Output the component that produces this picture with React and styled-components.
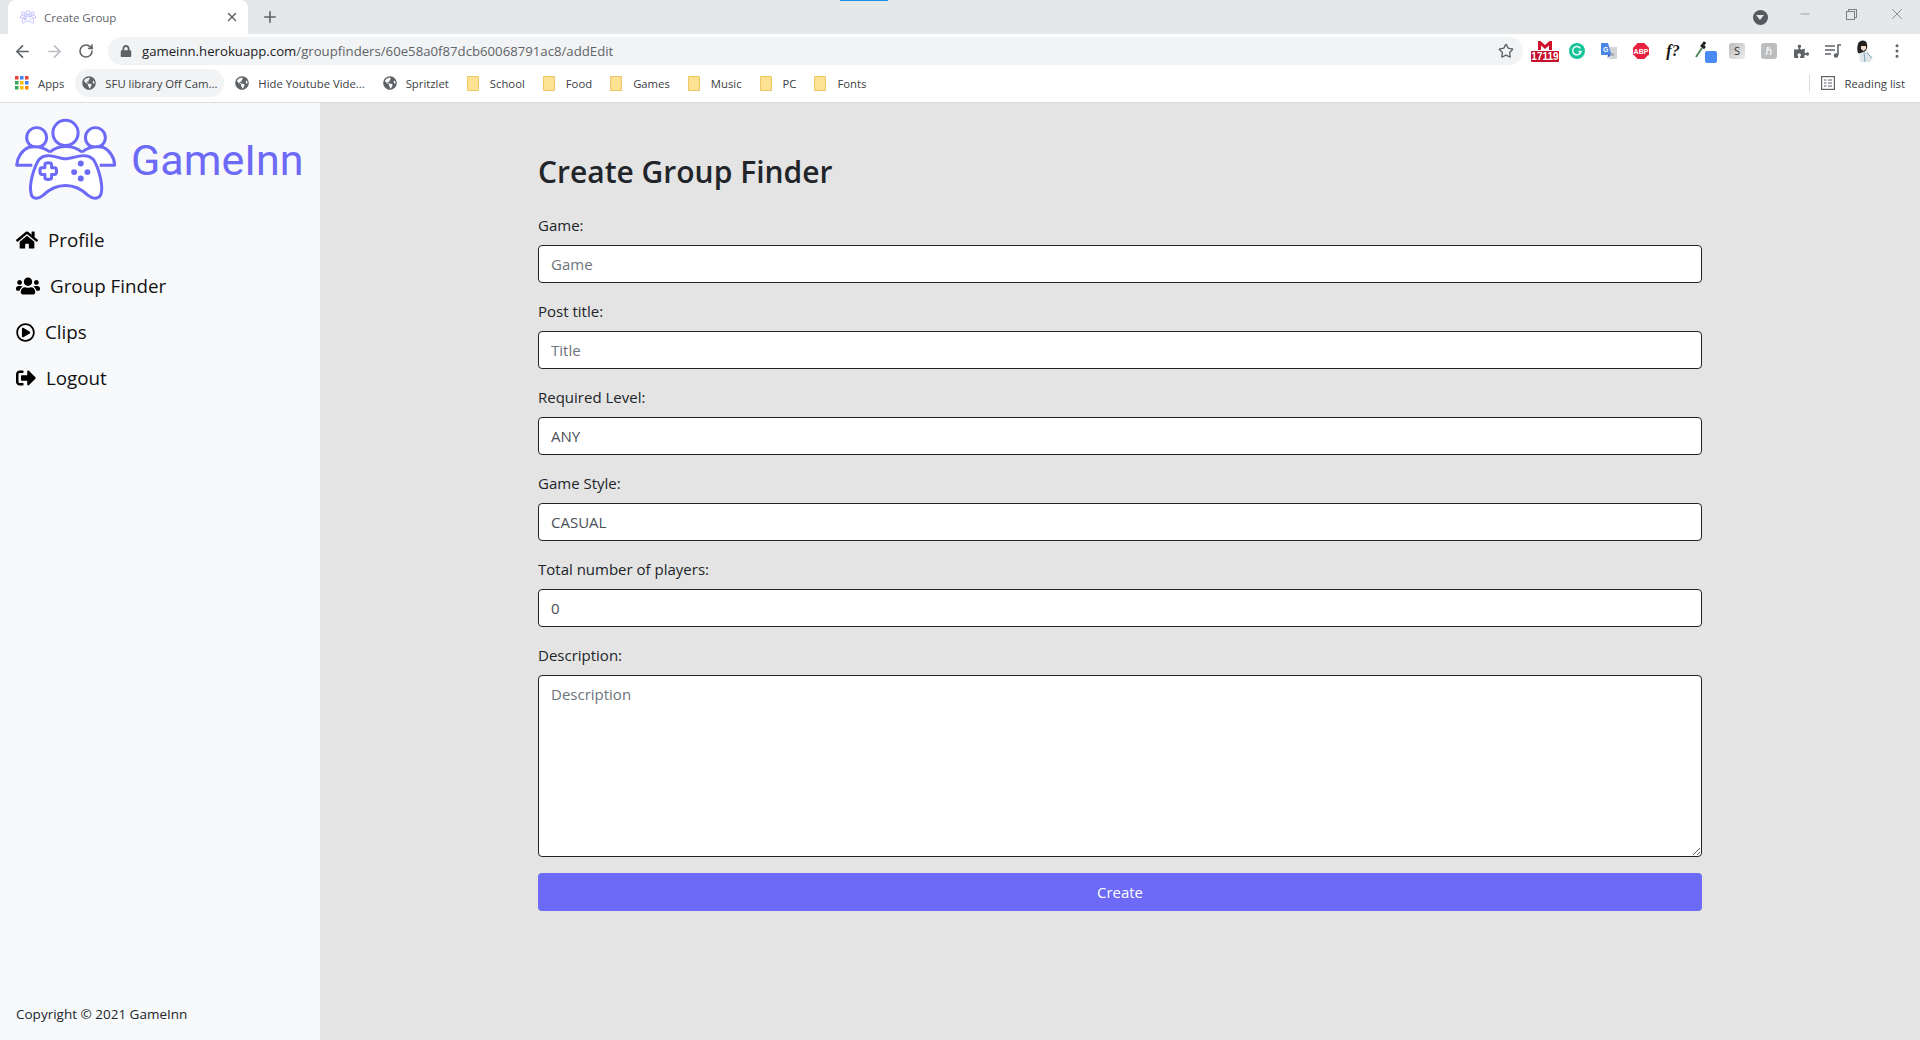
import React from "react";
import styled, { createGlobalStyle } from "styled-components";
import { FaHome, FaUsers, FaRegPlayCircle, FaSignOutAlt, FaGlobeAmericas, FaPuzzlePiece, FaLock } from "react-icons/fa";
import { ArrowLeft, ArrowRight, RotateCw, Star, Plus, X, Minus, MoreVertical } from "lucide-react";

const GlobalStyle = createGlobalStyle`
  html, body {
    margin: 0;
    padding: 0;
    height: 100%;
    overflow: hidden;
    font-family: "Open Sans", "Noto Sans", sans-serif;
  }
  * {
    box-sizing: border-box;
  }
`;

const LogoMark = ({ width, height, strokeWidth = 9, faded }) => (
  <LogoSvg
    $faded={faded}
    width={width}
    height={height}
    viewBox="24 25 302 250"
    fill="#fff"
    stroke="#6c6af6"
    strokeWidth={strokeWidth}
    strokeLinejoin="round"
  >
    <circle cx="172" cy="70" r="38" />
    <circle cx="85" cy="84" r="30" />
    <circle cx="262" cy="84" r="30" />
    <path d="M125 128C105 112 80 110 62 113C40 122 26 145 25 167H72" />
    <path d="M222 128C240 112 265 110 285 113C305 122 320 145 320 167H275" />
    <path d="M125 128C150 105 195 105 222 128" />
    <path d="M92 150C115 125 150 148 172 148C195 148 232 125 256 150C272 175 285 225 280 250C275 272 255 270 240 258C222 240 200 228 172 228C145 228 122 240 104 258C90 270 70 272 68 250C62 225 76 175 92 150Z" />
    <path d="M110 165C110 158 130 158 130 165V175H140C147 175 147 195 140 195H130V205C130 212 110 212 110 205V195H100C93 195 93 175 100 175H110Z" />
    <g fill="#6c6af6" stroke="none">
      <circle cx="218" cy="162" r="9" />
      <circle cx="198" cy="188" r="9" />
      <circle cx="238" cy="188" r="9" />
      <circle cx="218" cy="207" r="9" />
    </g>
  </LogoSvg>
);

const AppsIcon = () => (
  <svg width="14" height="14" viewBox="0 0 14 14">
    {["#ea4335", "#4285f4", "#ea4335", "#34a853", "#fbbc05", "#4285f4", "#34a853", "#fbbc05", "#fb8c00"].map((c, i) => (
      <rect key={i} x={(i % 3) * 5} y={Math.floor(i / 3) * 5} width="3.500" height="3.500" fill={c} />
    ))}
  </svg>
);

const FolderIcon = () => (
  <svg width="12" height="15" viewBox="0 0 12 15">
    <path d="M.5.500H11.500V14.500H.5Z" fill="#fde293" stroke="#eec765" />
  </svg>
);

const ReadingIcon = () => (
  <svg width="14" height="14" viewBox="0 0 14 14" fill="none" stroke="#5f6368" strokeWidth="1.200">
    <rect x=".6" y=".6" width="12.800" height="12.800" />
    <path d="M3 4H5.500M7 4H11M3 7H5.500M7 7H11M3 10H5.500M7 10H11" />
  </svg>
);

const GmailIcon = () => (
  <svg width="14" height="9" viewBox="0 0 14 9">
    <path d="M0 0H2.500L7 4L11.500 0H14V9H11V4.500L7 8L3 4.500V9H0Z" fill="#d0122c" />
  </svg>
);

const GrammarlyIcon = () => (
  <svg width="16" height="16" viewBox="0 0 16 16">
    <circle cx="8" cy="8" r="8" fill="#15c39a" />
    <path d="M11.500 5.500A4.200 4.200 0 1 0 12 8.500H9.500" fill="none" stroke="#fff" strokeWidth="1.400" />
  </svg>
);

const TranslateIcon = () => (
  <svg width="16" height="17" viewBox="0 0 16 17">
    <path d="M6 4H16V16H8Z" fill="#d3d5d8" />
    <path d="M0 1C0 .4.4 0 1 0H7L10.500 12H1C.4 12 0 11.600 0 11Z" fill="#4a86e8" />
    <path d="M7 12L6.500 15L9.500 12Z" fill="#2a5fb8" />
    <text x="2" y="8.500" fontSize="7" fontWeight="700" fill="#fff" fontFamily="Liberation Sans">G</text>
    <text x="10" y="13" fontSize="6" fill="#777" fontFamily="Liberation Sans">x</text>
  </svg>
);

const AbpIcon = () => (
  <svg width="16" height="16" viewBox="0 0 16 16">
    <path d="M4.700 0H11.300L16 4.700V11.300L11.300 16H4.700L0 11.300V4.700Z" fill="#e8213f" />
    <text x="8" y="10.500" textAnchor="middle" fontSize="7" fontWeight="700" fill="#fff" fontFamily="Liberation Sans">ABP</text>
  </svg>
);

const DropperIcon = () => (
  <svg width="12" height="18" viewBox="0 0 12 18">
    <path d="M1 17L7 8" stroke="#4c8a5a" strokeWidth="2" />
    <path d="M6 5L10 8" stroke="#222" strokeWidth="3" />
    <path d="M8 5L10 2" stroke="#222" strokeWidth="3" />
  </svg>
);

const PlaylistIcon = () => (
  <svg width="16" height="14" viewBox="0 0 16 14" fill="none" stroke="#5f6368" strokeWidth="1.400">
    <path d="M0 2H10M0 6H10M0 10H6" />
    <path d="M13 11V1H16" strokeWidth="1.600" />
    <circle cx="11" cy="11.500" r="2.200" fill="#5f6368" stroke="none" />
  </svg>
);

const AvatarIcon = () => (
  <svg width="18" height="22" viewBox="0 0 18 22">
    <path d="M3 13L10 10L17 18L14 22H4Z" fill="#dfe7ea" />
    <path d="M8 12L9 22M11 13L16 18" stroke="#7fa7b8" strokeWidth="1" />
    <path d="M2 4C3 0 10 -1 11 4C12 8 10 12 7 12C6 12 4 14 2 13C1 10 1 7 2 4Z" fill="#23201f" />
    <path d="M5 6H10V9L7.500 11L5 9Z" fill="#f2d9c8" />
  </svg>
);

const bookmarks = [
  { label: "SFU library Off Cam...", icon: "globe", active: true },
  { label: "Hide Youtube Vide...", icon: "globe" },
  { label: "Spritzlet", icon: "globe" },
  { label: "School" },
  { label: "Food" },
  { label: "Games" },
  { label: "Music" },
  { label: "PC" },
  { label: "Fonts" },
];

const navItems = [
  { label: "Profile", Icon: FaHome, size: 22 },
  { label: "Group Finder", Icon: FaUsers, size: 24 },
  { label: "Clips", Icon: FaRegPlayCircle, size: 19 },
  { label: "Logout", Icon: FaSignOutAlt, size: 20 },
];

const fields = [
  { label: "Game:", placeholder: "Game" },
  { label: "Post title:", placeholder: "Title" },
  { label: "Required Level:", value: "ANY" },
  { label: "Game Style:", value: "CASUAL" },
  { label: "Total number of players:", value: "0" },
];

const BrowserChrome = () => (
  <Chrome>
    <LoadingStrip />
    <TabStrip>
      <Tab>
        <LogoMark width={16} height={14} strokeWidth={14} faded />
        <TabTitle>Create Group</TabTitle>
        <X size={14} color="#5f6368" strokeWidth={2.4} />
      </Tab>
      <NewTab>
        <Plus size={18} color="#5f6368" strokeWidth={2.2} />
      </NewTab>
      <WindowControls>
        <ProfileSlot>
          <ProfileDrop />
        </ProfileSlot>
        <WindowButton>
          <Minus size={14} color="#6b7075" strokeWidth={1} />
        </WindowButton>
        <WindowButton>
          <RestoreIcon />
        </WindowButton>
        <WindowButton>
          <X size={18} color="#6b7075" strokeWidth={1} />
        </WindowButton>
      </WindowControls>
    </TabStrip>
    <Toolbar>
      <ToolSlot>
        <ArrowLeft size={19} color="#5f6368" strokeWidth={2.2} />
      </ToolSlot>
      <ToolSlot>
        <ArrowRight size={19} color="#b9bcc0" strokeWidth={2.2} />
      </ToolSlot>
      <ToolSlot>
        <RotateCw size={16} color="#5f6368" strokeWidth={2.4} />
      </ToolSlot>
      <Omnibox>
        <FaLock size={12} color="#5f6368" />
        <Url>
          <b>gameinn.herokuapp.com</b>/groupfinders/60e58a0f87dcb60068791ac8/addEdit
        </Url>
        <Star size={16} color="#5f6368" strokeWidth={2} />
      </Omnibox>
      <Extensions>
        <ToolSlot>
          <MailBadge>
            <GmailIcon />
            <MailCount>17119</MailCount>
          </MailBadge>
        </ToolSlot>
        <ToolSlot>
          <GrammarlyIcon />
        </ToolSlot>
        <ToolSlot>
          <TranslateIcon />
        </ToolSlot>
        <ToolSlot>
          <AbpIcon />
        </ToolSlot>
        <ToolSlot>
          <FontBadge>f?</FontBadge>
        </ToolSlot>
        <ToolSlot>
          <DropperBox>
            <DropperIcon />
            <DropperBadge />
          </DropperBox>
        </ToolSlot>
        <ToolSlot>
          <GreySquare $light>S</GreySquare>
        </ToolSlot>
        <ToolSlot>
          <GreySquare>ℏ</GreySquare>
        </ToolSlot>
        <ToolSlot>
          <FaPuzzlePiece size={15} color="#5f6368" />
        </ToolSlot>
        <ToolSlot>
          <PlaylistIcon />
        </ToolSlot>
        <ToolSlot>
          <AvatarIcon />
        </ToolSlot>
        <ToolSlot>
          <MoreVertical size={18} color="#5f6368" />
        </ToolSlot>
      </Extensions>
    </Toolbar>
    <BookmarkBar>
      <Bookmark>
        <AppsIcon />
        Apps
      </Bookmark>
      {bookmarks.map((b) => (
        <Bookmark key={b.label} $active={b.active} $folder={!b.icon}>
          {b.icon ? <FaGlobeAmericas size={14} color="#5f6368" /> : <FolderIcon />}
          {b.label}
        </Bookmark>
      ))}
      <ReadingList>
        <ReadingIcon />
        Reading list
      </ReadingList>
    </BookmarkBar>
  </Chrome>
);

const App = () => {
  return (
    <Page>
      <GlobalStyle />
      <BrowserChrome />
      <Body>
        <Sidebar>
          <div>
            <Brand>
              <LogoMark width={101} height={83} />
              <BrandName>GameInn</BrandName>
            </Brand>
            <Nav>
              {navItems.map(({ label, Icon, size }) => (
                <NavLink key={label}>
                  <Icon size={size} color="#000" />
                  {label}
                </NavLink>
              ))}
            </Nav>
          </div>
          <Copyright>Copyright © 2021 GameInn</Copyright>
        </Sidebar>
        <Main>
          <Title>Create Group Finder</Title>
          {fields.map((f) => (
            <FormGroup key={f.label}>
              <Label>{f.label}</Label>
              <Input placeholder={f.placeholder} defaultValue={f.value} />
            </FormGroup>
          ))}
          <FormGroup>
            <Label>Description:</Label>
            <TextArea placeholder="Description" />
          </FormGroup>
          <SubmitButton type="button">Create</SubmitButton>
        </Main>
      </Body>
    </Page>
  );
};

export default App;

let Page = styled.div`
  width: 1920px;
  height: 1040px;
  display: flex;
  flex-direction: column;
  overflow: hidden;
`;

let Chrome = styled.header`
  position: relative;
  flex: none;
  height: 103px;
  background: #fff;
  border-bottom: 1px solid #dadce0;
`;

let LoadingStrip = styled.div`
  position: absolute;
  left: 840px;
  top: 0;
  width: 48px;
  height: 1px;
  background: #1a8fe3;
`;

let TabStrip = styled.div`
  height: 34px;
  background: #e5e8eb;
  display: flex;
  padding-left: 8px;
`;

let Tab = styled.div`
  width: 240px;
  height: 34px;
  background: #fff;
  border-radius: 8px 8px 0 0;
  display: flex;
  align-items: center;
  padding: 0 9px 0 12px;
  gap: 8px;
`;

let TabTitle = styled.span`
  flex: 1;
  font-size: 11.500px;
  color: #5f6368;
`;

let NewTab = styled.div`
  width: 44px;
  height: 34px;
  display: flex;
  align-items: center;
  justify-content: center;
`;

let WindowControls = styled.div`
  margin-left: auto;
  display: flex;
`;

let ProfileSlot = styled.div`
  width: 44px;
  height: 34px;
  display: flex;
  align-items: center;
  justify-content: center;
`;

let ProfileDrop = styled.div`
  width: 15px;
  height: 15px;
  border-radius: 50%;
  background: #55585c;
  display: flex;
  align-items: center;
  justify-content: center;

  &::after {
    content: "";
    border-left: 4px solid transparent;
    border-right: 4px solid transparent;
    border-top: 5px solid #e5e8eb;
    margin-top: 1px;
  }
`;

let WindowButton = styled.div`
  width: 46px;
  height: 28px;
  display: flex;
  align-items: center;
  justify-content: center;
`;

let RestoreIcon = styled.div`
  width: 9px;
  height: 9px;
  margin: 2px 2px 0 0;
  border: 1px solid #7b8085;
  box-shadow: 2px -2px 0 -1px #e5e8eb, 2px -2px 0 0 #7b8085;
`;

let Toolbar = styled.div`
  height: 34px;
  display: flex;
  align-items: center;
  padding-left: 6px;
`;

let ToolSlot = styled.div`
  width: 32px;
  height: 28px;
  flex: none;
  display: flex;
  align-items: center;
  justify-content: center;
`;

let Omnibox = styled.div`
  width: 1415px;
  margin: 0 6px;
  height: 28px;
  border-radius: 14px;
  background: #f1f3f4;
  display: flex;
  align-items: center;
  padding: 0 9px 0 12px;
  gap: 10px;
`;

let Url = styled.div`
  flex: 1;
  font-size: 13.200px;
  color: #5f6368;

  b {
    font-weight: 400;
    color: #202124;
  }
`;

let Extensions = styled.div`
  display: flex;
  align-items: center;
`;

let MailBadge = styled.div`
  width: 28px;
  display: flex;
  flex-direction: column;
  align-items: center;
  gap: 1px;
`;

let MailCount = styled.div`
  width: 28px;
  height: 11px;
  background: #c4102a;
  border-radius: 1px;
  color: #fff;
  font-family: "Liberation Sans", sans-serif;
  font-size: 10px;
  line-height: 11px;
  font-weight: 700;
  text-align: center;
`;

let FontBadge = styled.div`
  font-family: "Liberation Serif", serif;
  font-style: italic;
  font-weight: 700;
  font-size: 16px;
  color: #111;
`;

let DropperBox = styled.div`
  position: relative;
  width: 22px;
  height: 22px;
  padding-left: 1px;
`;

let DropperBadge = styled.div`
  position: absolute;
  right: -1px;
  bottom: -1px;
  width: 12px;
  height: 12px;
  border-radius: 2px;
  background: #4a8af4;
`;

let GreySquare = styled.div`
  width: 16px;
  height: 16px;
  border-radius: 3px;
  background: ${(props) => (props.$light ? "linear-gradient(135deg, #bbb, #eee)" : "#bcbdbe")};
  color: ${(props) => (props.$light ? "#333" : "#fff")};
  font-size: 11px;
  line-height: 16px;
  text-align: center;
`;

let BookmarkBar = styled.div`
  height: 34px;
  display: flex;
  align-items: center;
  gap: 4px;
  padding: 0 0 4px 8px;
`;

let Bookmark = styled.div`
  display: flex;
  align-items: center;
  gap: ${(props) => (props.$folder ? "11px" : "9px")};
  height: 28px;
  padding: 0 7px;
  border-radius: 14px;
  background: ${(props) => (props.$active ? "#f1f3f4" : "transparent")};
  font-size: 11.300px;
  color: #3c4043;
  white-space: nowrap;
`;

let ReadingList = styled.div`
  margin-left: auto;
  display: flex;
  align-items: center;
  gap: 10px;
  height: 18px;
  padding: 0 15px 0 11px;
  border-left: 1px solid #dadce0;
  font-size: 11.300px;
  color: #3c4043;
`;

let Body = styled.div`
  flex: 1;
  min-height: 0;
  display: flex;
`;

let Sidebar = styled.aside`
  width: 320px;
  flex: none;
  background: #f8f9fb;
  display: flex;
  flex-direction: column;
  justify-content: space-between;
  padding: 15px 0 17px 16px;
`;

let Brand = styled.div`
  display: flex;
  align-items: center;
  gap: 14px;
`;

let LogoSvg = styled.svg`
  flex: none;
  overflow: visible;
  opacity: ${(props) => (props.$faded ? 0.55 : 1)};
`;

let BrandName = styled.div`
  font-family: Roboto, sans-serif;
  font-size: 43px;
  color: #6c6af6;
`;

let Nav = styled.nav`
  display: flex;
  flex-direction: column;
  margin-top: 16px;
`;

let NavLink = styled.a`
  height: 46px;
  display: flex;
  align-items: center;
  gap: 10px;
  font-size: 18.800px;
  color: #111;
`;

let Copyright = styled.div`
  font-size: 13.500px;
  color: #212529;
`;

let Main = styled.main`
  flex: 1;
  background: #e4e4e4;
  padding: 50px 218px 0;
`;

let Title = styled.h2`
  margin: 0 0 22px;
  font-size: 30px;
  line-height: 38px;
  font-weight: 600;
  color: #212529;
`;

let FormGroup = styled.div`
  margin-bottom: 16px;
`;

let Label = styled.label`
  display: block;
  margin-bottom: 8px;
  font-size: 15px;
  line-height: 24px;
  color: #212529;
`;

let Input = styled.input`
  display: block;
  width: 100%;
  height: 38px;
  padding: 6px 12px;
  border: 1px solid #212529;
  border-radius: 4px;
  background: #fff;
  font: inherit;
  font-size: 15px;
  color: #495057;
  outline: none;

  &::placeholder {
    color: #6c757d;
  }
`;

let TextArea = styled.textarea`
  display: block;
  width: 100%;
  height: 182px;
  padding: 8px 12px;
  border: 1px solid #212529;
  border-radius: 4px;
  background: #fff;
  font: inherit;
  font-size: 15px;
  color: #495057;
  outline: none;

  &::placeholder {
    color: #6c757d;
  }
`;

let SubmitButton = styled.button`
  display: block;
  width: 100%;
  height: 38px;
  border: none;
  border-radius: 4px;
  background: #6c6af6;
  font: inherit;
  font-size: 15px;
  color: #fff;
`;
